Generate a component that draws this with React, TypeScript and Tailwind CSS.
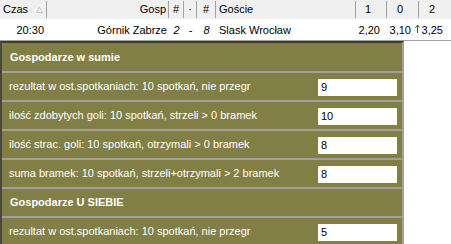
const font = { fontFamily: '"Liberation Sans", Arial, sans-serif' };

type StatRow = { label: string; value: string };

const sections: { title: string; rows: StatRow[] }[] = [
  {
    title: "Gospodarze w sumie",
    rows: [
      { label: "rezultat w ost.spotkaniach: 10 spotkań, nie przegr", value: "9" },
      { label: "ilość zdobytych goli: 10 spotkań, strzeli > 0 bramek", value: "10" },
      { label: "ilość strac. goli: 10 spotkań, otrzymali > 0 bramek", value: "8" },
      { label: "suma bramek: 10 spotkań, strzeli+otrzymali > 2 bramek", value: "8" },
    ],
  },
  {
    title: "Gospodarze U SIEBIE",
    rows: [{ label: "rezultat w ost.spotkaniach: 10 spotkań, nie przegr", value: "5" }],
  },
];

const cols = "grid grid-cols-[47px_122px_15px_13px_19px_140px_31px_32px_32px]";

const SortArrow = () => (
  <svg width="7" height="6" viewBox="0 0 7 6" className="ml-[8px]">
    <path d="M3.5 0.5 L6.5 5.5 L0.5 5.5 Z" fill="#f4f4f4" stroke="#c8c8c8" strokeWidth="1" />
  </svg>
);

// odds moved up
const UpArrow = () => (
  <svg width="5" height="9" viewBox="0 0 5 9" className="block shrink-0 self-start mt-[3px] mr-[2px]">
    <path d="M2.5 1 V9" stroke="#008000" strokeWidth="1" />
    <path d="M0.5 3.5 L2.5 1 L4.5 3.5" fill="none" stroke="#008000" strokeWidth="1" />
  </svg>
);

function MatchHeader() {
  const cell = "flex items-center border-r border-[#a0a0a0] h-[17px]";
  return (
    <div className={`${cols} h-[19px] py-[1px] bg-[#f0f0f0] text-[11px] text-black`}>
      <div className={`${cell} pl-[3px]`}>
        Czas
        <SortArrow />
      </div>
      <div className={`${cell} justify-end pr-[2px]`}>Gosp</div>
      <div className={`${cell} justify-center`}>#</div>
      <div className={`${cell} justify-center`}>·</div>
      <div className={`${cell} justify-center`}>#</div>
      <div className={`${cell} pl-[3px]`}>Goście</div>
      <div className={`${cell} pl-[9px]`}>1</div>
      <div className={`${cell} pl-[10px]`}>0</div>
      <div className="flex items-center h-[17px] pl-[10px]">2</div>
    </div>
  );
}

function MatchRow() {
  const cell = "flex items-center h-[21px] pt-[2px]";
  return (
    <div className={`${cols} bg-white border-b border-[#a0a0a0] text-[11px] text-black`}>
      <div className={`${cell} justify-end pr-[3px]`}>20:30</div>
      <div className={`${cell} justify-end pr-[2px]`}>Górnik Zabrze</div>
      <div className={`${cell} justify-center italic`}>2</div>
      <div className={`${cell} justify-center`}>-</div>
      <div className={`${cell} justify-center italic`}>8</div>
      <div className={`${cell} pl-[3px]`}>Slask Wrocław</div>
      <div className={`${cell} justify-end pr-[7px]`}>2,20</div>
      <div className={`${cell} justify-end pr-[8px]`}>3,10</div>
      <div className={`${cell} justify-end pr-[8px]`}>
        <UpArrow />
        <span>3,25</span>
      </div>
    </div>
  );
}

function StatsPanel() {
  return (
    <div className="w-[404px] border-l-2 border-t-2 border-r-2 border-l-[#4a4a3a] border-t-[#3c3c3c] border-r-[#a0a0a0] bg-[#a0a0a0] flex flex-col gap-[2px] text-[11px] text-white">
      {sections.map((s, si) => (
        <div key={s.title} className="contents">
          <div
            className={`bg-[#817f46] flex items-center pl-[8px] font-bold ${si === 0 ? "h-[28px]" : "h-[27px]"}`}
          >
            {s.title}
          </div>
          {s.rows.map((r, i) => (
            <div key={i} className="bg-[#817f46] h-[27px] flex items-center justify-between pl-[7px] pr-[5px]">
              <span>{r.label}</span>
              <div className="w-[79px] h-[17px] mt-[2px] bg-white text-black pl-[3px] flex items-center">
                {r.value}
              </div>
            </div>
          ))}
        </div>
      ))}
    </div>
  );
}

export default function App() {
  return (
    <div style={font} className="w-[451px] h-[244px] overflow-hidden bg-white">
      <MatchHeader />
      <MatchRow />
      <StatsPanel />
    </div>
  );
}
